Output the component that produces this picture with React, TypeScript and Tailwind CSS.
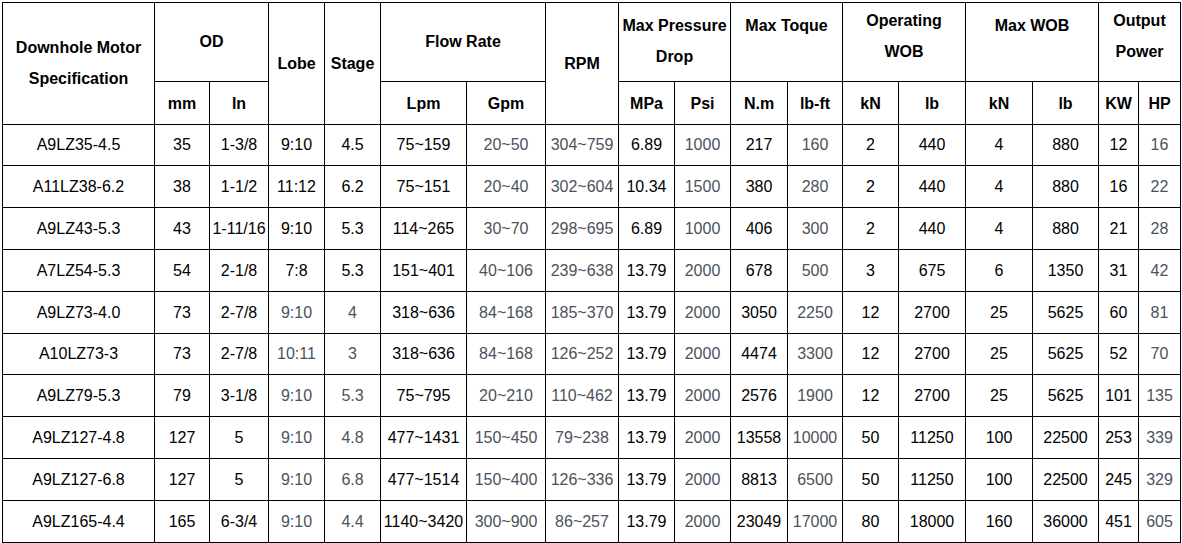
import React from "react";

const rows: string[][] = [
  ["A9LZ35-4.5", "35", "1-3/8", "9:10", "4.5", "75~159", "20~50", "304~759", "6.89", "1000", "217", "160", "2", "440", "4", "880", "12", "16"],
  ["A11LZ38-6.2", "38", "1-1/2", "11:12", "6.2", "75~151", "20~40", "302~604", "10.34", "1500", "380", "280", "2", "440", "4", "880", "16", "22"],
  ["A9LZ43-5.3", "43", "1-11/16", "9:10", "5.3", "114~265", "30~70", "298~695", "6.89", "1000", "406", "300", "2", "440", "4", "880", "21", "28"],
  ["A7LZ54-5.3", "54", "2-1/8", "7:8", "5.3", "151~401", "40~106", "239~638", "13.79", "2000", "678", "500", "3", "675", "6", "1350", "31", "42"],
  ["A9LZ73-4.0", "73", "2-7/8", "9:10", "4", "318~636", "84~168", "185~370", "13.79", "2000", "3050", "2250", "12", "2700", "25", "5625", "60", "81"],
  ["A10LZ73-3", "73", "2-7/8", "10:11", "3", "318~636", "84~168", "126~252", "13.79", "2000", "4474", "3300", "12", "2700", "25", "5625", "52", "70"],
  ["A9LZ79-5.3", "79", "3-1/8", "9:10", "5.3", "75~795", "20~210", "110~462", "13.79", "2000", "2576", "1900", "12", "2700", "25", "5625", "101", "135"],
  ["A9LZ127-4.8", "127", "5", "9:10", "4.8", "477~1431", "150~450", "79~238", "13.79", "2000", "13558", "10000", "50", "11250", "100", "22500", "253", "339"],
  ["A9LZ127-6.8", "127", "5", "9:10", "6.8", "477~1514", "150~400", "126~336", "13.79", "2000", "8813", "6500", "50", "11250", "100", "22500", "245", "329"],
  ["A9LZ165-4.4", "165", "6-3/4", "9:10", "4.4", "1140~3420", "300~900", "86~257", "13.79", "2000", "23049", "17000", "80", "18000", "160", "36000", "451", "605"],
];

const grayCols = [6, 7, 9, 11, 17];

function H({ children, className = "" }: { children: React.ReactNode; className?: string }) {
  return (
    <div
      className={`bg-white flex flex-col items-center justify-center text-center font-bold leading-[31px] whitespace-nowrap ${className}`}
    >
      {children}
    </div>
  );
}

export default function App() {
  return (
    <div className="bg-white p-[2px] w-[1182px] h-[543px] font-['Liberation_Sans',Arial,sans-serif] text-[16px] text-black">
      <div className="grid w-fit bg-black p-px gap-px grid-cols-[151px_54px_58px_55px_55px_85px_78px_72px_55px_55px_56px_54px_55px_66px_66px_65px_39px_41px] grid-rows-[78px_42px_40px_41px_41px_41px_41px_40px_41px_41px_41px_41px]">
        <H className="row-span-2 pb-[2px]">
          <span>Downhole Motor</span>
          <span>Specification</span>
        </H>
        <H className="col-span-2 pb-[2px]">OD</H>
        <H className="row-span-2 pb-px">Lobe</H>
        <H className="row-span-2 pb-px">Stage</H>
        <H className="col-span-2 pb-[2px]">Flow Rate</H>
        <H className="row-span-2 pb-px">RPM</H>
        <H className="col-span-2 pb-[2px]">
          <span>Max Pressure</span>
          <span>Drop</span>
        </H>
        <H className="col-span-2 pb-[33px]">Max Toque</H>
        <H className="col-span-2 pb-[13px]">
          <span>Operating</span>
          <span>WOB</span>
        </H>
        <H className="col-span-2 pb-[33px]">Max WOB</H>
        <H className="col-span-2 pb-[13px]">
          <span>Output</span>
          <span>Power</span>
        </H>
        {["mm", "In", "Lpm", "Gpm", "MPa", "Psi", "N.m", "lb-ft", "kN", "lb", "kN", "lb", "KW", "HP"].map((t, i) => (
          <H key={i}>{t}</H>
        ))}
        {rows.map((r, ri) =>
          r.map((c, ci) => {
            const gray = grayCols.includes(ci) || (ri >= 4 && (ci === 3 || ci === 4));
            return (
              <div
                key={`${ri}-${ci}`}
                className={`bg-white flex items-center justify-center whitespace-nowrap ${gray ? "text-[#4b525b]" : "text-black"}`}
              >
                {c}
              </div>
            );
          })
        )}
      </div>
    </div>
  );
}
